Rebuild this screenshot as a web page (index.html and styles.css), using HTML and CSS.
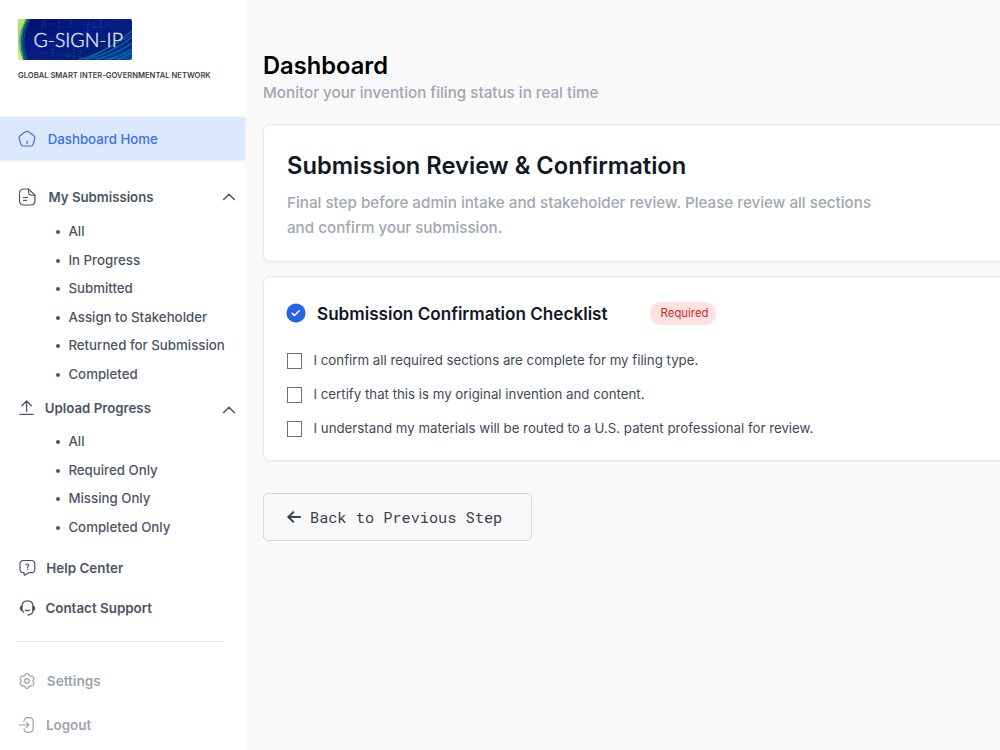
FILE: index.html
```html
<!DOCTYPE html>
<html lang="en">
<head>
<meta charset="utf-8">
<title>Dashboard</title>
<link rel="stylesheet" href="styles.css">
</head>
<body>
<div class="app">
  <aside class="sidebar">
    <div class="brand">
      <svg class="logo" width="114" height="41" viewBox="0 0 114 41">
        <defs>
          <linearGradient id="sky" x1="0" y1="0" x2="1" y2="1">
            <stop offset="0" stop-color="#031069"/><stop offset=".45" stop-color="#061c86"/><stop offset=".75" stop-color="#042173"/><stop offset="1" stop-color="#0753a6"/>
          </linearGradient>
          <linearGradient id="rim" x1="0" y1="0" x2="0" y2="1">
            <stop offset="0" stop-color="#b9e86c"/><stop offset=".5" stop-color="#8fd66a"/><stop offset="1" stop-color="#d3f58a"/>
          </linearGradient>
          <clipPath id="frame"><path d="M0 0h112q2 0 2 2v37q0 2-2 2H0z"/></clipPath>
        </defs>
        <g clip-path="url(#frame)">
          <rect width="114" height="41" fill="url(#sky)"/>
          <g fill="none" stroke="#2371c4" stroke-width="1" opacity=".5">
            <path d="M24 2v9M27 1v7M35 30v9M41 3v7M53 1v6M56 27v13M62 31v9M70 2v10M76 4v6M83 1v8M50 34v6" stroke-dasharray="2 1"/>
            <path d="M30 5h8M44 8h12M60 5h7M77 8h11M23 34h10M40 36h14M66 13h5M88 5h12" stroke-dasharray="1 2"/>
          </g>
          <g fill="none" stroke="#1287d8" stroke-width="1.4" opacity=".6">
            <path d="M60 41Q88 34 114 12M67 41Q94 34 114 18M77 41Q98 35 114 24M88 41Q104 37 114 30"/>
            <path d="M98 41l16-7M73 38l41-22" stroke="#42b5e8" stroke-width=".6"/>
          </g>
          <path d="M0 0H9Q-1 20 6 41H0z" fill="url(#rim)"/>
          <path d="M10 0Q-1 20 7 41" fill="none" stroke="#16656f" stroke-width="2.2"/>
          <path d="M8 0Q-3 20 5 41" fill="none" stroke="#3f9661" stroke-width=".8"/>
          <path d="M12 0Q1 20 9 41" fill="none" stroke="#1255a0" stroke-width="1"/>
        </g>
        <text class="logo-text" x="15.4" y="28" textLength="89.5" lengthAdjust="spacingAndGlyphs">G-SIGN-IP</text>
      </svg>
      <div class="tagline">GLOBAL SMART INTER-GOVERNMENTAL NETWORK</div>
    </div>

    <nav>
      <a class="nav-active">
        <svg class="icon" viewBox="0 0 18 18"><path d="M7.5 1.8 2.1 5.7Q.8 6.8 1.2 8.3L2.8 14.1Q3.3 16 5.2 16h7.6q1.9 0 2.4-1.9l1.6-5.8q.4-1.5-.9-2.6L10.5 1.8Q9 .8 7.5 1.8z"/><path d="M9 11.2v2.2"/></svg>
        <span class="label-home">Dashboard Home</span>
      </a>

      <div class="group group-submissions">
        <svg class="icon" viewBox="0 0 18 18"><path d="M10.5 1H6Q1.5 1 1.5 5.5v7Q1.5 17 6 17h6.5q4.5 0 4.5-4.5V7.3z"/><path d="M10.5 1v3.300q0 3 3 3H17M5.500 9.500h4.200M5.500 12.400h3" stroke-width="1.100"/></svg>
        <span class="label-submissions">My Submissions</span>
        <svg class="chevron" viewBox="0 0 14 8"><path d="M1.700 6.500 7 1.300l5.300 5.200"/></svg>
      </div>
      <ul class="sub sub-submissions">
        <li>All</li><li>In Progress</li><li>Submitted</li><li>Assign to Stakeholder</li><li>Returned for Submission</li><li>Completed</li>
      </ul>

      <div class="group group-upload">
        <svg class="icon" viewBox="0 0 18 18"><path d="M8.600 12.300V2.300M3.800 6.700l4.800-4.800 4.800 4.800M2 15.300h13.200" stroke-width="1.350"/></svg>
        <span class="label-upload">Upload Progress</span>
        <svg class="chevron chevron-low" viewBox="0 0 14 8"><path d="M1.700 6.500 7 1.300l5.300 5.200"/></svg>
      </div>
      <ul class="sub sub-upload">
        <li>All</li><li>Required Only</li><li>Missing Only</li><li>Completed Only</li>
      </ul>

      <div class="group group-help">
        <svg class="icon" viewBox="0 0 18 18"><path d="M5.500 1.500h7.800q3.500 0 3.500 3.500v5.200q0 3.500-3.500 3.500h-1.800q-1 0-1.700.5L7 16q-.9.500-.9-.5v-1.800h-.6Q2 13.700 2 10.200V5q0-3.500 3.500-3.500z"/><path d="M8 6.300Q8 5 9.400 5t1.400 1.300c0 1.200-1.400 1.100-1.400 2.300M9.400 10v.7" stroke-width="1.100"/></svg>
        <span class="label-help">Help Center</span>
      </div>
      <div class="group group-contact">
        <svg class="icon" viewBox="0 0 18 18"><path d="M4 7.500Q4 1.800 9.500 1.800T15 7.500v3.500q0 4.500-4.800 5M7.400 11.200q2 .9 4 0M4.200 11.400l1.600 1.900" stroke-width="1.300"/><path d="M4 7v4.500Q2.200 11.300 2.200 9.300T4 7zM15 7v4.500q1.800-.2 1.800-2.200T15 7z" fill="currentColor"/></svg>
        <span class="label-contact">Contact Support</span>
      </div>

      <div class="divider"></div>

      <div class="group group-settings muted">
        <svg class="icon" viewBox="0 0 18 18"><circle cx="9" cy="9" r="2.300"/><path d="M7.300 2.200q1.700-1 3.400 0l.6 1.500q.5.600 1.300.5l1.600-.1q1.700 1 1.800 2.900l-1 1.300q-.4.700 0 1.400l1 1.300q-.1 1.900-1.800 2.900l-1.600-.1q-.8-.1-1.300.5l-.6 1.500q-1.700 1-3.400 0l-.6-1.500q-.5-.6-1.300-.5l-1.600.1Q2.100 12.900 2 11l1-1.300q.4-.7 0-1.400L2 7q.1-1.900 1.800-2.900l1.600.1q.8.1 1.300-.5z"/></svg>
        <span class="label-settings">Settings</span>
      </div>
      <div class="group group-logout muted">
        <svg class="icon" viewBox="0 0 18 18"><path d="M6 5.500Q6.200 1.700 9.800 1.700h1.400q4 0 4 4v6.600q0 4-4 4H9.800Q6.200 16.300 6 12.500M1 9h9.600M8.500 6.700 10.800 9l-2.300 2.300"/></svg>
        <span class="label-logout">Logout</span>
      </div>
    </nav>
  </aside>

  <main class="main">
    <h1>Dashboard</h1>
    <p class="subtitle">Monitor your invention filing status in real time</p>

    <section class="card review">
      <h2>Submission Review &amp; Confirmation</h2>
      <p>Final step before admin intake and stakeholder review. Please review all sections<br>and confirm your submission.</p>
    </section>

    <section class="card checklist">
      <header>
        <svg class="badge" viewBox="0 0 20 20"><circle cx="10" cy="10" r="9.600"/><path d="m6.200 10.300 2.300 2.200 4.800-4.700"/></svg>
        <h3>Submission Confirmation Checklist</h3>
        <span class="pill">Required</span>
      </header>
      <div class="check"><span class="box"></span>I confirm all required sections are complete for my filing type.</div>
      <div class="check"><span class="box"></span>I certify that this is my original invention and content.</div>
      <div class="check"><span class="box"></span>I understand my materials will be routed to a U.S. patent professional for review.</div>
    </section>

    <button class="back" type="button">
      <svg viewBox="0 0 14 12"><path d="M13.200 6H1.500M6.300 1.200 1.300 6l5 4.800"/></svg>
      <span>Back to Previous Step</span>
    </button>
  </main>
</div>
</body>
</html>
```
FILE: styles.css
```css
* { box-sizing: border-box; }
body { margin: 0; font-family: Inter, "Liberation Sans", sans-serif; background: #f9f9f9; }
h1, h2, h3, p, ul { margin: 0; padding: 0; }
.app { display: flex; width: 1000px; height: 750px; overflow: hidden; }

.sidebar { flex: none; width: 245px; background: #fff; color: #4b5565; }
.brand { height: 117px; padding: 19px 0 0 18px; }
.logo { display: block; }
.logo-text { font: 300 19px Lato, sans-serif; fill: #e6e9f8; stroke: #e6e9f8; stroke-width: .35px; }
.tagline { margin-top: 11px; font-size: 7.62px; font-weight: 600; line-height: 10px; color: #3f3f3f; white-space: nowrap; }

.icon { flex: none; width: 18px; height: 18px; fill: none; stroke: currentColor; stroke-width: 1.2; stroke-linecap: round; stroke-linejoin: round; }
.nav-active { display: flex; align-items: center; height: 43px; padding-left: 18px; background: #dbe9fe; color: #3b6fec; font-size: 13.28px; font-weight: 500; box-shadow: 0 1px 3px rgba(0, 0, 0, .09); }
.label-home { margin-left: 11.7px; padding-top: 1px; }

.group { display: flex; align-items: center; height: 30px; padding: 0 9px 0 18px; font-size: 13.4px; font-weight: 600; white-space: nowrap; }
.group-submissions { margin-top: 22px; font-size: 13.21px; }
.group-upload { margin-top: 5px; font-size: 13.25px; }
.group-help { margin-top: 12px; }
.group-contact { margin-top: 9.5px; }
.group-settings { margin-top: 24px; font-size: 13.6px; }
.group-logout { margin-top: 13.5px; }
.label-submissions { margin-left: 12.5px; }
.label-upload { margin-left: 8.8px; }
.label-help { margin-left: 10.3px; }
.label-contact { margin-left: 9.4px; }
.label-settings { margin-left: 10.8px; }
.label-logout { margin-left: 10px; }
.muted { color: #9ca3af; }
.chevron { width: 14px; height: 8px; margin: -1px 0 0 auto; fill: none; stroke: currentColor; stroke-width: 1.6; stroke-linecap: round; stroke-linejoin: round; }
.chevron-low { margin-top: 3px; }

.sub { list-style: none; font-size: 13.28px; font-weight: 500; }
.sub-submissions { margin-top: 5px; }
.sub-upload { margin-top: 4px; }
.sub li { display: flex; align-items: center; height: 28.5px; padding-left: 56px; white-space: nowrap; }
.sub li::before { content: ""; width: 4.4px; height: 4.4px; margin: 2px 8px 0 0; border-radius: 50%; background: currentColor; }
.divider { height: 1px; margin: 18.5px 21px 0 17px; background: #e5e7eb; }

.main { flex: 1; min-width: 0; padding: 51px 0 0 18px; }
h1 { font-size: 23.7px; font-weight: 600; line-height: 30px; color: #000; }
.subtitle { margin-top: 1px; font-size: 15.19px; font-weight: 500; line-height: 21px; color: #a0a7b2; }
.card { width: 760px; background: #fff; border: 1px solid #e9eaec; border-radius: 7px; box-shadow: 0 1px 2px rgba(0, 0, 0, .05); }
.review { height: 138px; margin-top: 21px; padding: 26px 23px 0; }
h2 { font-size: 23.7px; font-weight: 600; line-height: 30px; color: #111827; }
.review p { margin-top: 10px; font-size: 15.19px; font-weight: 500; line-height: 24.7px; color: #a0a7b2; }
.checklist { height: 185px; margin-top: 14px; padding: 24px 23px 0; }
.checklist header { display: flex; align-items: center; height: 24px; margin-bottom: 18px; }
.badge { width: 20px; height: 20px; margin: -1px 11px 0 -1px; fill: #2563eb; }
.badge path { fill: none; stroke: #fff; stroke-width: 1.6; stroke-linecap: round; stroke-linejoin: round; }
h3 { margin-top: 1px; font-size: 17.11px; font-weight: 600; color: #111827; }
.pill { display: flex; align-items: center; justify-content: center; width: 66px; height: 23px; margin-left: 42px; padding-left: 4px; border-radius: 12px; background: #fee2e2; color: #c92a2a; font-size: 11.39px; }
.check { display: flex; align-items: center; height: 34.2px; color: #414a5b; font-size: 13.28px; white-space: nowrap; }
.box { width: 15px; height: 16px; margin: 1px 12px 0 -.5px; border: 1px solid #707070; }
.back { display: flex; align-items: center; width: 269px; height: 48px; margin-top: 32px; padding: 0 0 0 22.5px; border: 1px solid #d5d7e2; border-radius: 5px; background: transparent; color: #374151; font: 15.25px "Roboto Mono", "Liberation Mono", monospace; }
.back svg { width: 14px; height: 12px; margin-right: 9.5px; fill: none; stroke: currentColor; stroke-width: 1.9; stroke-linecap: round; stroke-linejoin: round; }
```
